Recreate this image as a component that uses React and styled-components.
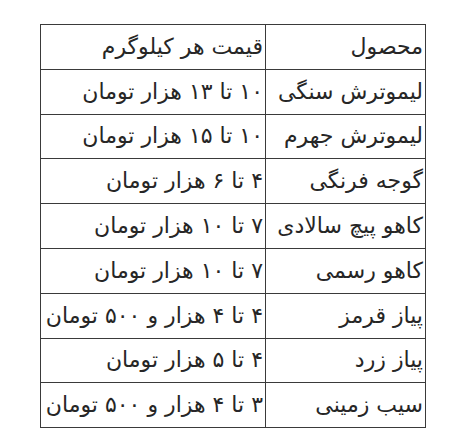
import React from 'react';
import styled, { createGlobalStyle } from 'styled-components';

const GlobalStyle = createGlobalStyle`
  html, body {
    margin: 0;
    padding: 0;
    background: #ffffff;
  }
  body {
    width: 450px;
    height: 434px;
    overflow: hidden;
  }
`;

const Page = styled.div`
  padding: 24px 26px 0 40px;
`;

const PriceTable = styled.table`
  width: 385px;
  border-collapse: collapse;
  direction: rtl;
  font-family: "DejaVu Sans", sans-serif;
  font-size: 22px;
  color: #262626;
  table-layout: fixed;
`;

const Cell = styled.td`
  height: 43.8px;
  padding: 0 2px 0 0;
  border: 1px solid #3a3a3a;
  text-align: right;
  vertical-align: middle;
  white-space: nowrap;
  overflow: hidden;
  line-height: 1;
  width: ${props => props.$wide ? '222px' : '157px'};
`;

const rows = [
  ['محصول', 'قیمت هر کیلوگرم'],
  ['لیموترش سنگی', '۱۰ تا ۱۳ هزار تومان'],
  ['لیموترش جهرم', '۱۰ تا ۱۵ هزار تومان'],
  ['گوجه فرنگی', '۴ تا ۶ هزار تومان'],
  ['کاهو پیچ سالادی', '۷ تا ۱۰ هزار تومان'],
  ['کاهو رسمی', '۷ تا ۱۰ هزار تومان'],
  ['پیاز قرمز', '۴ تا ۴ هزار و ۵۰۰ تومان'],
  ['پیاز زرد', '۴ تا ۵ هزار تومان'],
  ['سیب زمینی', '۳ تا ۴ هزار و ۵۰۰ تومان'],
];

export default function App() {
  return (
    <Page>
      <GlobalStyle />
      <PriceTable>
        <tbody>
          {rows.map(([name, price]) => (
            <tr key={name}>
              <Cell>{name}</Cell>
              <Cell $wide>{price}</Cell>
            </tr>
          ))}
        </tbody>
      </PriceTable>
    </Page>
  );
}
